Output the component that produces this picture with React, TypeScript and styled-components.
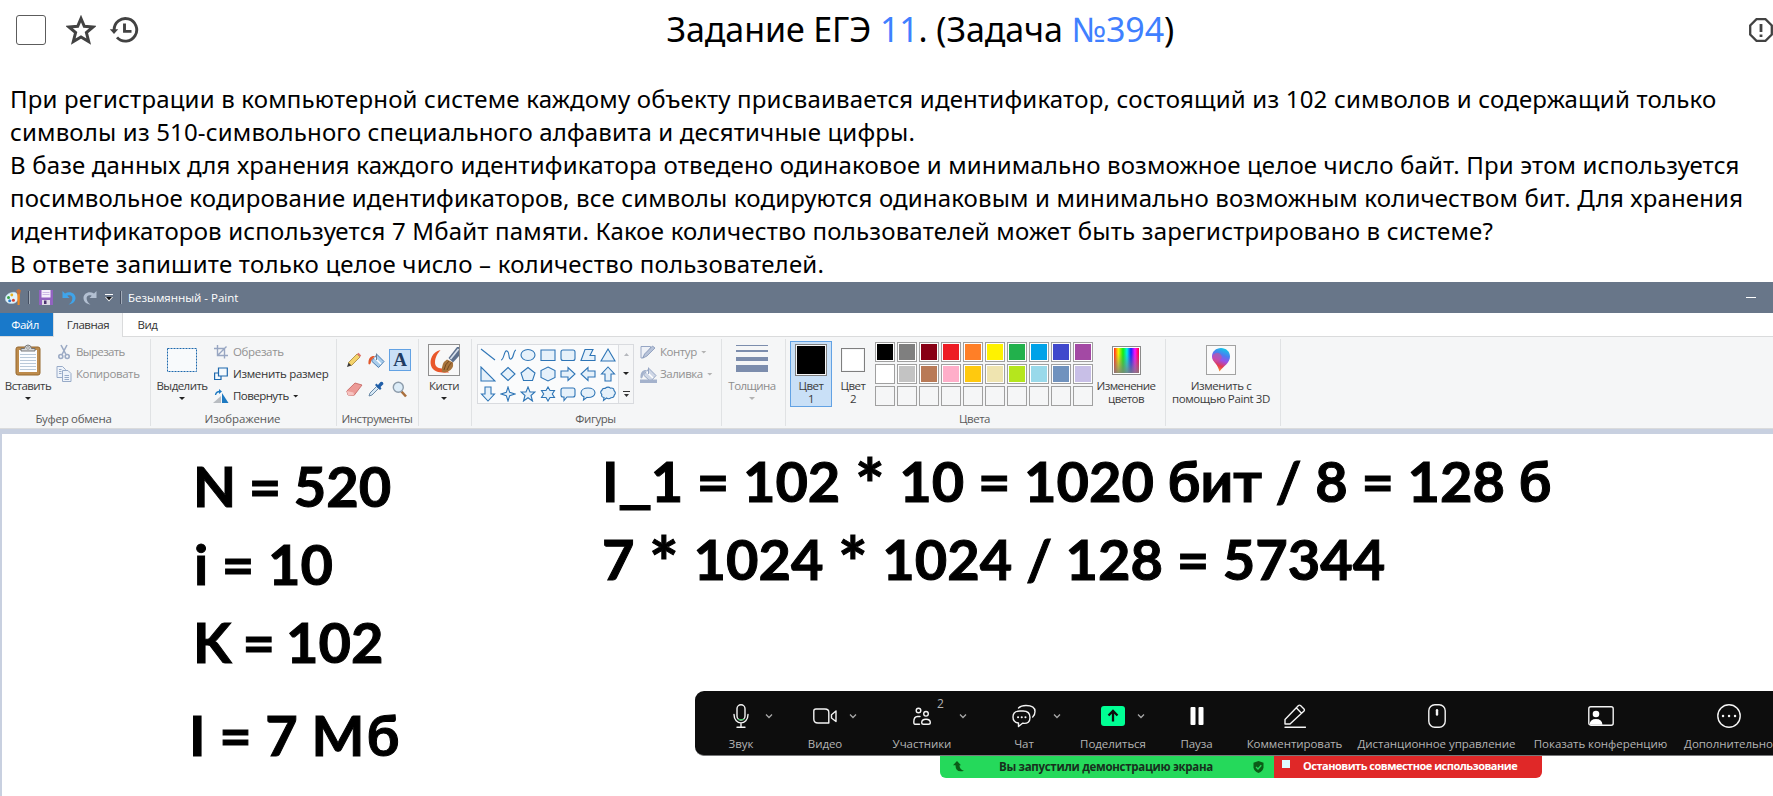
import React from "react";
import styled, { createGlobalStyle, css } from "styled-components";

const GlobalStyle = createGlobalStyle`
  *, *::before, *::after { box-sizing: border-box; }
  html, body { margin: 0; padding: 0; background: #fff; }
  body { overflow: hidden; }
  svg { display: block; flex: none; }
`;

const ui = `"Open Sans", "Noto Sans", sans-serif`;

const Page = styled.main`
  position: relative;
  width: 1773px;
  height: 796px;
  overflow: hidden;
  display: flex;
  flex-direction: column;
  background: #fff;
  color: #000;
  font-family: "Noto Sans", "Open Sans", sans-serif;
`;

/* ---------- task header and statement ---------- */

const TaskHeader = styled.header`
  display: flex;
  align-items: center;
  height: 59px;
  flex: none;
`;

const TaskTools = styled.div`
  display: flex;
  align-items: center;
  width: 200px;
  padding-left: 16px;
`;

const CheckBox = styled.span`
  width: 30px;
  height: 30px;
  border: 1px solid #5c5c5c;
  border-radius: 3px;
  margin-right: 20px;
`;

const TaskTitle = styled.h1`
  width: 1444px;
  margin: 0 0 2px;
  font-size: 34px;
  line-height: 46px;
  font-weight: 400;
  letter-spacing: -0.11px;
  text-align: center;
  white-space: nowrap;
`;

const TitleLink = styled.span`
  color: #3f80ff;
`;

const ReportSlot = styled.div`
  margin-left: 108px;
`;

const Statement = styled.section`
  height: 223px;
  flex: none;
  padding: 23px 0 0 10px;
`;

const StatementLine = styled.p<{ $ls?: number }>`
  margin: 0;
  font-size: 24px;
  line-height: 33px;
  letter-spacing: ${(p) => p.$ls ?? 0}px;
  white-space: nowrap;
`;

/* ---------- Paint window ---------- */

const TitleBar = styled.div`
  height: 31px;
  flex: none;
  display: flex;
  align-items: center;
  background: #687689;
  color: #fff;
  font: 11.5px/16px ${ui};
  padding-left: 5px;
`;

const BarDivider = styled.i<{ $l: number; $r: number }>`
  width: 2px;
  height: 13px;
  border-left: 1px solid #465062;
  border-right: 1px solid #a3acb9;
  margin: 0 ${(p) => p.$r}px 0 ${(p) => p.$l}px;
`;

const WindowTitle = styled.span`
  letter-spacing: 0;
`;

const Minimize = styled.i`
  width: 10px;
  height: 1px;
  background: #fff;
  margin: 0 17px 0 auto;
`;

const TabRow = styled.div`
  height: 24px;
  flex: none;
  display: flex;
  background: #fff;
  border-bottom: 1px solid #dadbdc;
  font: 11.5px/22px ${ui};
`;

const Tab = styled.div<{ $w: number; $kind?: "file" | "active" }>`
  width: ${(p) => p.$w}px;
  height: 24px;
  padding-top: 1px;
  text-align: center;
  color: #333;
  letter-spacing: -0.45px;
  ${(p) =>
    p.$kind === "file" &&
    css`
      height: 23px;
      padding-right: 3px;
      background: #1979ca;
      color: #fff;
    `}
  ${(p) =>
    p.$kind === "active" &&
    css`
      background: #f5f6f7;
      border: 1px solid #dadbdc;
      border-width: 0 1px;
    `}
`;

const Ribbon = styled.div`
  height: 92px;
  flex: none;
  display: flex;
  background: #f5f6f7;
  border-bottom: 1px solid #dadbdc;
  font: 11.5px/16px ${ui};
  color: #3b3b3b;
`;

const Group = styled.section<{ $w: number }>`
  width: ${(p) => p.$w}px;
  flex: none;
  height: 87px;
  margin-top: 2px;
  display: flex;
  flex-direction: column;
  border-right: 1px solid #e0e2e4;
`;

const GroupBody = styled.div<{ $pl?: number }>`
  display: flex;
  height: 72px;
  flex: none;
  padding-left: ${(p) => p.$pl ?? 0}px;
`;

const GroupLabel = styled.div<{ $ls?: number; $shift?: number }>`
  text-align: center;
  height: 15px;
  line-height: 15px;
  color: #5a5a5a;
  padding-right: ${(p) => p.$shift ?? 0}px;
  letter-spacing: ${(p) => p.$ls ?? -0.45}px;
  white-space: nowrap;
`;

const BigButton = styled.div<{ $w: number; $off?: boolean; $on?: boolean }>`
  width: ${(p) => p.$w}px;
  height: ${(p) => (p.$on ? 66 : 68)}px;
  margin-top: ${(p) => (p.$on ? 2 : 0)}px;
  flex: none;
  display: flex;
  flex-direction: column;
  align-items: center;
  text-align: center;
  white-space: nowrap;
  letter-spacing: -0.55px;
  color: ${(p) => (p.$off ? "#8d8d8d" : "#3b3b3b")};
  ${(p) =>
    p.$on &&
    css`
      background: #c9e0f7;
      box-shadow: inset 0 0 0 1px #62a2e4;
    `}
`;

const BigIcon = styled.div<{ $on?: boolean }>`
  height: ${(p) => (p.$on ? 37 : 39)}px;
  padding-top: ${(p) => (p.$on ? 1 : 3)}px;
  flex: none;
  display: flex;
  align-items: center;
  justify-content: center;
`;

const Caption = styled.span<{ $ls?: number }>`
  line-height: 13px;
  padding-top: 1px;
  letter-spacing: ${(p) => p.$ls ?? -0.55}px;
`;

const Caret = styled.i<{ $off?: boolean; $mt?: number; $ml?: number }>`
  width: 6px;
  height: 3px;
  flex: none;
  background: ${(p) => (p.$off ? "#b3b3b3" : "#222")};
  clip-path: polygon(0 0, 100% 0, 50% 100%);
  margin-top: ${(p) => p.$mt ?? 0}px;
  margin-left: ${(p) => p.$ml ?? 0}px;
`;

const Stack = styled.div<{ $ml?: number; $w: number }>`
  width: ${(p) => p.$w}px;
  margin-left: ${(p) => p.$ml ?? 0}px;
  display: flex;
  flex-direction: column;
  padding-top: 2px;
`;

const SmallButton = styled.div<{ $off?: boolean; $ls?: number }>`
  height: 22px;
  display: flex;
  align-items: center;
  gap: 4px;
  white-space: nowrap;
  letter-spacing: ${(p) => p.$ls ?? -0.4}px;
  color: ${(p) => (p.$off ? "#929292" : "#333")};
`;

const IconSlot = styled.span`
  width: 16px;
  display: flex;
  justify-content: center;
`;

const ToolGrid = styled.div`
  display: grid;
  grid-template-columns: 18px 26px 22px;
  grid-template-rows: 22px 22px;
  row-gap: 7px;
  padding-top: 10px;
`;

const ToolCell = styled.div<{ $on?: boolean }>`
  display: flex;
  align-items: center;
  justify-content: center;
  ${(p) =>
    p.$on &&
    css`
      background: #c9e0f7;
      border: 1px solid #62a2e4;
    `}
`;

const LetterTool = styled.b`
  font: bold 19px/20px "Liberation Serif", serif;
  letter-spacing: 0;
  color: #1f3c63;
`;

const Gallery = styled.div`
  width: 157px;
  height: 60px;
  margin-top: 5px;
  border: 1px solid #d9dbdf;
  background: #fafbfc;
  display: flex;
`;

const ShapeGrid = styled.div`
  display: grid;
  grid-template-columns: repeat(7, 20px);
  grid-template-rows: repeat(3, 19.6px);
  place-items: center;
  width: 141px;
  height: 58px;
  border-right: 1px solid #dcdee2;
`;

const GalleryScroll = styled.div`
  flex: 1;
  background: #f5f6f7;
  display: flex;
  flex-direction: column;
  align-items: center;
  padding-top: 8px;
  gap: 16px;
`;

const Swatch = styled.span<{ $c: string; $s: number }>`
  width: ${(p) => p.$s}px;
  height: ${(p) => p.$s}px;
  background: ${(p) => p.$c};
  border: 1px solid #7f7f7f;
  box-shadow: inset 0 0 0 1px #f5f6f7;
`;

const Palette = styled.div`
  display: grid;
  grid-template-columns: repeat(10, 20px);
  grid-auto-rows: 20px;
  gap: 2px;
  padding-top: 3px;
  margin-left: 1px;
`;

const Cell = styled.span<{ $c?: string }>`
  border: 1px solid #a0a0a0;
  background: ${(p) => p.$c ?? "#f5f6f7"};
  box-shadow: inset 0 0 0 1px ${(p) => (p.$c ? "#fff" : "#f5f6f7")};
`;

const Workspace = styled.div`
  position: relative;
  flex: 1;
  background: #c8d0e0;
  padding: 5px 0 0 2px;
`;

const Sheet = styled.div`
  position: relative;
  height: 100%;
  background: #fff;
`;

/* Text blocks that were typed freely on the drawing sheet. */
const CanvasText = styled.div<{ $x: number; $y: number; $ws?: number }>`
  position: absolute;
  left: ${(p) => p.$x}px;
  top: ${(p) => p.$y}px;
  font: 700 56px/78px Lato, "Open Sans", sans-serif;
  word-spacing: ${(p) => p.$ws ?? 0}px;
  -webkit-text-stroke: 1px #000;
  white-space: pre;
`;

const Star = styled.span`
  font-size: 70px;
  line-height: 0;
  vertical-align: -9px;
  margin: 0 1px;
`;

const Underscore = styled.span`
  display: inline-block;
  transform: scaleX(1.35);
  margin: 0 3px;
`;

const Wide = styled.span`
  letter-spacing: 3px;
`;

/* ---------- conference overlay ---------- */

const Overlay = styled.div`
  position: absolute;
  left: 695px;
  top: 691px;
  width: 1100px;
`;

const CallBar = styled.div`
  height: 65px;
  background: #0d0d0d;
  border-bottom: 1px solid #77787a;
  border-radius: 9px 0 0 9px;
  display: flex;
  padding-left: 4px;
`;

const CallItem = styled.div<{ $w: number }>`
  position: relative;
  width: ${(p) => p.$w}px;
  flex: none;
  display: flex;
  flex-direction: column;
  align-items: center;
  padding-top: 13px;
  font: 11.5px/16px ${ui};
  letter-spacing: -0.05px;
  color: #b4b4b4;
  white-space: nowrap;
`;

const CallIcon = styled.div`
  height: 24px;
  margin-bottom: 8px;
  display: flex;
  align-items: center;
`;

const Chevron = styled.svg<{ $dx: number }>`
  position: absolute;
  left: calc(50% + ${(p) => p.$dx - 4}px);
  top: 22px;
`;

const Badge = styled.span`
  position: absolute;
  left: 70px;
  top: 5px;
  font-size: 12px;
`;

const ShareStatus = styled.div`
  display: flex;
  height: 22px;
  width: 602px;
  margin-left: 245px;
  border-radius: 0 0 6px 6px;
  overflow: hidden;
  font: 700 11.5px/22px ${ui};
  white-space: nowrap;
`;

const Sharing = styled.div`
  width: 334px;
  flex: none;
  background: #25d95b;
  color: #17301d;
  display: flex;
  padding-left: 13px;
`;

const SharingText = styled.span`
  width: 254px;
  padding-left: 35px;
  margin-right: 35px;
  flex: none;
  letter-spacing: -0.3px;
`;

const StopShare = styled.div`
  width: 268px;
  flex: none;
  background: #e02828;
  color: #fff;
  display: flex;
  padding-left: 8px;
  font-size: 11px;
  line-height: 20px;
  letter-spacing: -0.5px;
`;

const StopSquare = styled.i`
  width: 8px;
  height: 8px;
  flex: none;
  margin: 4px 13px 0 0;
  background: #dffcff;
`;

/* ---------- drawings ---------- */

const shapePaths = [
  "M1 2 15 13",
  "M1 13C4 13 4 3 7 4s1 9 4 8 2-8 5-9",
  "M8 2.500C12 2.500 15 5 15 8s-3 5.500-7 5.500S1 11 1 8s3-5.500 7-5.500z",
  "M1 3H15V13.500H1z",
  "M3 3H13Q15 3 15 5V11.500Q15 13.500 13 13.500H3Q1 13.500 1 11.500V5Q1 3 3 3z",
  "M1 13.500 5 2.500H13L10 8.500H15V13.500z",
  "M8 2 15 14H1z",
  "M1 1V15H15z",
  "M8 1.500 15 8 8 14.500 1 8z",
  "M8 1.500 15 7 12.500 14.500H3.500L1 7z",
  "M8 1 15 4.500V11.500L8 15 1 11.500V4.500z",
  "M1 5H8V1.500L15 8 8 14.500V11H1z",
  "M15 5H8V1.500L1 8 8 14.500V11H15z",
  "M5 15V8H1.500L8 1 14.500 8H11V15z",
  "M5 1V8H1.500L8 15 14.500 8H11V1z",
  "M8 1 9.700 6.300 15 8 9.700 9.700 8 15 6.300 9.700 1 8 6.300 6.300z",
  "M8 1 10 6H15L11 9.500 12.500 15 8 11.700 3.500 15 5 9.500 1 6H6z",
  "M8 1 10 4.500H14.500L12.300 8 14.500 11.500H10L8 15 6 11.500H1.500L3.700 8 1.500 4.500H6z",
  "M3 2H13Q15 2 15 4V9Q15 11 13 11H7L4 14.500V11H3Q1 11 1 9V4Q1 2 3 2z",
  "M8 2C12 2 15 4 15 6.800S12 11.500 8 11.500L7 11.400 3.500 14 4 10.800C2 10 1 8.500 1 6.800 1 4 4 2 8 2z",
  "M5 2.500Q8 0 10.500 2.200 14 1.500 14 4.500 16.500 7 14.300 9 14 12 10.800 11.800 9 13.500 6.500 12L3.500 14.500 4 11.500Q1 11 1.800 8.300-.500 6 2 4.300 2.200 2 5 2.500z",
];

const Shape = ({ d, n }: { d: string; n: number }) => (
  <svg width="16" height="16" viewBox="0 0 16 16">
    <path d={d} fill={n < 2 ? "none" : "#e6f1fa"} stroke="#2e75b6" strokeWidth="1.1" />
  </svg>
);

const StarIcon = () => (
  <svg width="30" height="30" viewBox="0 0 30 30">
    <path
      d="M15 3.500 18.300 11.300 27 12 20.400 17.500 22.700 26.500 15 21.900 7.300 26.500 9.600 17.500 3 12 11.700 11.300z"
      fill="none"
      stroke="#424242"
      strokeWidth="3"
      strokeLinejoin="miter"
    />
  </svg>
);

const HistoryIcon = () => (
  <svg width="30" height="30" viewBox="0 0 30 30" fill="none" stroke="#424242" strokeWidth="2.900">
    <path d="M5.100 16V15A11.300 11.300 0 1 1 8 22.400" />
    <path d="M.800 14.300H9.200L5 19z" fill="#424242" stroke="none" />
    <path d="M15.500 8.500V16.400H22.500" />
  </svg>
);

const ReportIcon = () => (
  <svg width="24" height="24" viewBox="0 0 24 24" fill="none" stroke="#424242" strokeWidth="2.300">
    <path d="M7.500 1.200H16.500L22.800 7.500V16.500L16.500 22.800H7.500L1.200 16.500V7.500z" />
    <path d="M12 6V14" strokeWidth="2.800" />
    <path d="M12 16.500V19" strokeWidth="2.800" />
  </svg>
);

const PaintLogo = () => (
  <svg width="17" height="17" viewBox="0 0 17 17">
    <path d="M7 3.500C11 2.500 13.500 5 13 9c-.300 4-3 5.500-6.500 5.500C2.500 14.500 0 12.500.500 9 .800 6 3.500 4.200 7 3.500z" fill="#e3f3fb" stroke="#b5d9ec" strokeWidth=".6" />
    <circle cx="3.500" cy="8.500" r="1.500" fill="#3aa54a" />
    <circle cx="6.800" cy="6" r="1.400" fill="#e8b21d" />
    <circle cx="4.700" cy="11.700" r="1.500" fill="#2d7fd0" />
    <circle cx="8.400" cy="11.300" r="1.500" fill="#d9402d" />
    <path d="M12.300 5h2.600l-.300 11h-2z" fill="#f08a24" />
    <path d="M11.300 1.200 13.600 0l2.300 1.200L15 5.300h-2.800z" fill="#c9733c" />
  </svg>
);

const SaveIcon = () => (
  <svg width="14" height="15" viewBox="0 0 14 15">
    <path d="M0 0H14V15H0z" fill="#9263c0" />
    <path d="M2.500 0H11.500V7.500H2.500z" fill="#f5effc" />
    <path d="M3.500 2.500H10.500M3.500 4.500H10.500" stroke="#cdb9e6" />
    <path d="M3 10H11V15H3z" fill="#dedae6" />
    <path d="M5 10.500H7.500V14H5z" fill="#4c3370" />
  </svg>
);

const TurnIcon = ({ color, flip }: { color: string; flip?: boolean }) => (
  <svg width="14" height="15" viewBox="0 0 14 15">
    <g transform={flip ? "matrix(-1 0 0 1 14 0)" : undefined}>
      <path d="M.500 1V8H7.500L5.300 5.800C8 4.500 11 6 10.300 9.300 10 11.500 8.500 13.200 6.500 14.500 10.500 14 13.500 11.500 13.500 8 13.500 3 7.500.500 3 3.500z" fill={color} />
    </g>
  </svg>
);

const CustomizeIcon = () => (
  <svg width="8" height="9" viewBox="0 0 8 9">
    <path d="M0 1.500H8" stroke="#fff" />
    <path d="M0 4H8L4 8.500z" fill="#fff" />
    <path d="M1 4H7L4 7.300z" fill="#111" />
  </svg>
);

const PasteIcon = () => (
  <svg width="26" height="32" viewBox="0 0 26 32">
    <rect x="1" y="3" width="24" height="28" rx="2" fill="#bd8b4c" stroke="#96682f" />
    <path d="M4 6H22V28H4z" fill="#fbfdff" />
    <path d="M5 10.500H21M5 13.500H21M5 16.500H21M5 19.500H21M5 22.500H21M5 25.500H21" stroke="#b9c9d9" />
    <path d="M6 7V4.500H9.500Q10 1 13 1T16.500 4.500H20V7z" fill="#d5d8db" stroke="#6c6c6c" strokeWidth=".9" />
    <circle cx="13" cy="4" r="1.300" fill="#fff" stroke="#777" strokeWidth=".7" />
  </svg>
);

const CutIcon = () => (
  <svg width="14" height="16" viewBox="0 0 14 16" fill="none" stroke="#9baac4" strokeWidth="1.600">
    <path d="M4 1 9 10.500M10 1 5 10.500" />
    <circle cx="3.800" cy="12.500" r="2" />
    <circle cx="10.200" cy="12.500" r="2" />
  </svg>
);

const CopyIcon = () => (
  <svg width="16" height="16" viewBox="0 0 16 16" fill="#eef3fa" stroke="#98abc8">
    <path d="M1 .500H6.500L9.500 3.500V11.500H1z" />
    <path d="M6.500 4.500H12L15 7.500V15.500H6.500z" />
    <path d="M3 3.500H5.500M3 5.500H5.500M3 7.500H5.500M8.500 9.500H13M8.500 11.500H13M8.500 13.500H13" />
  </svg>
);

const SelectIcon = () => (
  <svg width="30" height="24" viewBox="0 0 30 24">
    <rect x=".5" y=".5" width="29" height="23" fill="#f8fafc" stroke="#1d68ad" strokeDasharray="2 1" />
  </svg>
);

const CropIcon = () => (
  <svg width="14" height="14" viewBox="0 0 14 14" fill="none" stroke="#98a6c2" strokeWidth="1.400">
    <path d="M3.500 0V10.500H14M0 3.500H10.500V13.500M4 10 12.500 1.500" />
  </svg>
);

const ResizeIcon = () => (
  <svg width="14" height="14" viewBox="0 0 14 14" fill="#f4f9fd" stroke="#1d68ad" strokeWidth="1.200">
    <path d="M.600 6H7V12.500H.600z" />
    <path d="M4.500 1H13.300V9H4.500z" />
  </svg>
);

const RotateIcon = () => (
  <svg width="16" height="15" viewBox="0 0 16 15">
    <path d="M0 14 8 7V14z" fill="#b9bdc2" />
    <path d="M9 4 15.500 14H9z" fill="#1e7ac2" />
    <path d="M2.500 6Q3 2.500 7 2.500" fill="none" stroke="#1e7ac2" strokeWidth="1.300" />
    <path d="M6 0 9 2.500 6 5z" fill="#1e7ac2" />
  </svg>
);

const PencilTool = () => (
  <svg width="16" height="16" viewBox="0 0 16 16">
    <path d="M1 15 2.500 10.500 5.500 13.500z" fill="#3c3a38" />
    <path d="M2.500 10.500 11 2 14 5 5.500 13.500z" fill="#f4d36b" stroke="#9c7726" strokeWidth=".7" />
    <path d="M11 2 12.500.800 15.200 3.500 14 5z" fill="#e0796d" />
  </svg>
);

const BucketTool = ({ gray }: { gray?: boolean }) => (
  <svg width="17" height="17" viewBox="0 0 17 17">
    <path d="M9 2.500 16 9.500 10.500 15.500 3.500 9z" fill={gray ? "#cfd7e6" : "#a9cdec"} stroke={gray ? "#96a6c4" : "#4d7fb3"} />
    <path d="M6.500 5.500 13 12" stroke="#fff" strokeWidth="1.500" />
    <path d="M8.500 8V1.500" stroke={gray ? "#96a6c4" : "#6c7d90"} />
    <path d="M7 4C3 3.500 0 6 .500 12 2 13.500 3 11 3.200 8.500z" fill={gray ? "#a4b2cc" : "#e2582b"} />
    {gray && <path d="M0 13.500H17V17H0z" fill="#a4b2cc" />}
  </svg>
);

const EraserTool = () => (
  <svg width="17" height="15" viewBox="0 0 17 15">
    <path d="M.800 9 9 1 16 3 8 13.500 2 13z" fill="#ec9a96" stroke="#c35f5c" strokeWidth=".8" />
    <path d="M.800 9 7.500 10.500 8 13.500 2 13z" fill="#f7c4c1" />
  </svg>
);

const DropperTool = () => (
  <svg width="16" height="16" viewBox="0 0 16 16">
    <path d="M1 15 2 12 8.500 5.500 10.500 7.500 4 14z" fill="#d8e9f6" stroke="#5d7f9f" strokeWidth=".9" />
    <path d="M7 4 8.500 2.500 10 4 12.500 1Q15 0 15.500 3L12.500 6 13.500 7.500 12 9z" fill="#215fa8" />
  </svg>
);

const ZoomTool = () => (
  <svg width="16" height="17" viewBox="0 0 16 17">
    <path d="M9.500 10.500 14 15.500" stroke="#a96f3d" strokeWidth="2.600" />
    <circle cx="6.300" cy="6.300" r="5" fill="#dcecf8" stroke="#8c9baa" strokeWidth="1.400" />
  </svg>
);

const BrushPicture = () => (
  <svg width="32" height="32" viewBox="0 0 32 32">
    <rect x=".5" y=".5" width="31" height="31" fill="#f8f8f8" stroke="#8f8f8f" />
    <path d="M12.500 6C4 8 1.500 16 3 21.500 5 28.500 13 29 21 28.500L17 24C11 25.500 7 23 7 18.500 7 13 10 9 12.500 6z" fill="#e9572b" />
    <path d="M20.500 14 29 3 31 3V12L25 18.500z" fill="#5d708c" />
    <path d="M22.500 15 30.500 5" stroke="#d7e0ec" strokeWidth="1.800" />
    <path d="M14 28Q13 19 19 15.500L25 18.500Q26 25 20 27.500 17 28.800 14 28z" fill="#a8743c" />
    <path d="M16 26Q17 20 21 17M19 26Q21 21 23.500 18.500" stroke="#74491f" fill="none" />
  </svg>
);

const OutlineIcon = () => (
  <svg width="16" height="14" viewBox="0 0 16 14">
    <path d="M1 1.500H10.500V3L3 12V13H1z" fill="#eef1f7" stroke="#96a6c4" />
    <path d="M3 13 4.500 9 12.500 1 15 3 7 11z" fill="#b7c3d9" stroke="#8496b8" strokeWidth=".8" />
  </svg>
);

const ThicknessIcon = () => (
  <svg width="32" height="30" viewBox="0 0 32 30" fill="#7c8dad">
    <path d="M0 0H32V1H0zM0 5H32V7H0zM0 12H32V16H0zM0 20H32V27H0z" />
  </svg>
);

const SpectrumPicture = () => (
  <svg width="29" height="29" viewBox="0 0 29 29">
    <defs>
      <linearGradient id="hue">
        <stop offset="0" stopColor="#f22" />
        <stop offset=".17" stopColor="#fe0" />
        <stop offset=".36" stopColor="#1e1" />
        <stop offset=".52" stopColor="#0ee" />
        <stop offset=".68" stopColor="#12f" />
        <stop offset=".84" stopColor="#f1f" />
        <stop offset="1" stopColor="#f03" />
      </linearGradient>
      <linearGradient id="fade" x2="0" y2="1">
        <stop offset=".2" stopColor="#808080" stopOpacity="0" />
        <stop offset="1" stopColor="#808080" stopOpacity=".85" />
      </linearGradient>
    </defs>
    <rect x=".5" y=".5" width="28" height="28" fill="#fff" stroke="#8b8b8b" />
    <path d="M2 2H27V27H2z" fill="url(#hue)" />
    <path d="M2 2H27V27H2z" fill="url(#fade)" />
  </svg>
);

const Paint3DPicture = () => (
  <svg width="30" height="30" viewBox="0 0 30 30">
    <defs>
      <linearGradient id="drop" x1=".3" y1="1" x2=".6" y2="0">
        <stop offset="0" stopColor="#f8a020" />
        <stop offset=".25" stopColor="#e63a50" />
        <stop offset=".5" stopColor="#9a50e8" />
        <stop offset=".72" stopColor="#4d7cf0" />
        <stop offset="1" stopColor="#12c6e8" />
      </linearGradient>
    </defs>
    <rect x=".5" y=".5" width="29" height="29" fill="#fafafa" stroke="#a2a2a2" />
    <path d="M15 3C20 3 24 6.500 24 11.500 24 18 17.500 21 13.500 26.500 12.500 23 11.500 21 9.500 18.500 7.500 16 6 14.500 6 11.500 6 6.500 10 3 15 3z" fill="url(#drop)" />
    <path d="M10 8Q14 7 16 12 13 18 9 17.500 6 14 7 10z" fill="#e44b86" opacity=".5" />
  </svg>
);

const Line = ({ w = 24, h = 24, children }: { w?: number; h?: number; children: React.ReactNode }) => (
  <svg width={w} height={h} viewBox={`0 0 ${w} ${h}`} fill="none" stroke="#f4f4f4" strokeWidth="1.400" strokeLinecap="round" strokeLinejoin="round">
    {children}
  </svg>
);

const MicIcon = () => (
  <Line w={16}>
    <rect x="4" y=".8" width="8" height="15.200" rx="4" />
    <path d="M1 10.500C1 21.700 15 21.700 15 10.500M8 19V23M4 23.200H12" />
    <path d="M5.500 15.600H10.500" stroke="#4fc76c" />
  </Line>
);

const VideoIcon = () => (
  <Line>
    <path d="M3 5H12Q15.800 5 15.800 8.500V19H5Q.800 19 .800 15V7Q.800 5 3 5zM18.500 10.800 23 7V17.500L18.500 14z" />
  </Line>
);

const PeopleIcon = () => (
  <Line w={18}>
    <circle cx="5.500" cy="6.500" r="2.300" />
    <circle cx="13" cy="9.800" r="2.300" />
    <path d="M6.500 20.300H2Q.800 20.300.800 18 .800 12.500 4.500 12.500H7" />
    <path d="M10.500 20.300Q8.700 20.300 8.700 18.500 8.700 15.200 13 15.200T17.300 18.500Q17.300 20.300 15.500 20.300z" />
  </Line>
);

const ChatIcon = () => (
  <Line>
    <path d="M8 7H11Q18 7 18 13.500T11 19.300H10.500L6.500 22.500V19Q1 18.500 1 13 1 7 8 7z" />
    <path d="M6.500 4Q9 1.500 14 1.500 23 1.500 23 7.500 23 11 20.700 13" />
    <path d="M6 13.200H6.100M9.700 13.200H9.800M13.400 13.200H13.500" strokeWidth="2" />
  </Line>
);

const ShareIcon = () => (
  <svg width="24" height="20" viewBox="0 0 24 20">
    <rect width="24" height="20" rx="3" fill="#00ff94" />
    <path d="M12 15.500V6M7.500 9.500 12 5 16.500 9.500" fill="none" stroke="#0d0d0d" strokeWidth="2.300" />
  </svg>
);

const PauseIcon = () => (
  <svg width="14" height="18" viewBox="0 0 14 18" fill="#fff">
    <rect x=".5" width="5" height="18" rx="1" />
    <rect x="8.500" width="5" height="18" rx="1" />
  </svg>
);

const AnnotateIcon = () => (
  <Line w={22}>
    <path d="M1 20V15.500L14.500 1.500Q15.500.700 16.500 1.500L20 5Q20.800 6 20 7L6 20zM12.500 4 17.300 9" />
    <path d="M1 23.300H21.500" />
  </Line>
);

const MouseIcon = () => (
  <Line w={18}>
    <rect x=".8" y=".8" width="16.400" height="22.400" rx="6" />
    <path d="M9 6.300V10.500" strokeWidth="2.400" />
  </Line>
);

const ShowMeetingIcon = () => (
  <Line w={26}>
    <rect x=".8" y="2.800" width="24.400" height="18.400" rx="2" />
    <circle cx="8" cy="10" r="3.300" fill="#fff" stroke="none" />
    <path d="M1.500 20.800Q2 15 8 15T14.500 20.800z" fill="#fff" stroke="none" />
  </Line>
);

const MoreIcon = () => (
  <Line>
    <circle cx="12" cy="12" r="11.200" />
    <path d="M6 12H6.100M12 12H12.100M18 12H18.100" strokeWidth="2.400" />
  </Line>
);

const ReturnArrow = () => (
  <svg width="11" height="20" viewBox="0 0 11 20">
    <path d="M4 5 8 9.200H6.500Q6.500 13.500 11 14.700 2.500 17 2.500 9.200H0z" fill="#0b5c17" />
  </svg>
);

const ShieldIcon = () => (
  <svg width="11" height="20" viewBox="0 0 11 20">
    <path d="M5.500 5 10.500 6.800V11.500Q10 15 5.500 17 1 15 .500 11.500V6.800z" fill="#0b5c17" />
    <path d="M3 11 5 13 8.300 9.300" fill="none" stroke="#25d95b" strokeWidth="1.300" />
  </svg>
);

/* ---------- data ---------- */

const statement: { text: string; ls: number }[] = [
  { ls: 0.185, text: "При регистрации в компьютерной системе каждому объекту присваивается идентификатор, состоящий из 102 символов и содержащий только" },
  { ls: 0.165, text: "символы из 510-символьного специального алфавита и десятичные цифры." },
  { ls: 0.155, text: "В базе данных для хранения каждого идентификатора отведено одинаковое и минимально возможное целое число байт. При этом используется" },
  { ls: 0.15, text: "посимвольное кодирование идентификаторов, все символы кодируются одинаковым и минимально возможным количеством бит. Для хранения" },
  { ls: 0.185, text: "идентификаторов используется 7 Мбайт памяти. Какое количество пользователей может быть зарегистрировано в системе?" },
  { ls: 0.205, text: "В ответе запишите только целое число – количество пользователей." },
];

const colors = [
  "#000000", "#7f7f7f", "#880015", "#ed1c24", "#ff7f27", "#fff200", "#22b14c", "#00a2e8", "#3f48cc", "#a349a4",
  "#ffffff", "#c3c3c3", "#b97a57", "#ffaec9", "#ffc90e", "#efe4b0", "#b5e61d", "#99d9ea", "#7092be", "#c8bfe7",
];
const emptyCells = Array.from({ length: 10 }, (_, i) => i);

const callItems: { label: string; w: number; icon: React.ReactNode; dx?: number; badge?: string }[] = [
  { label: "Звук", w: 84, icon: <MicIcon />, dx: 28 },
  { label: "Видео", w: 84, icon: <VideoIcon />, dx: 28 },
  { label: "Участники", w: 110, icon: <PeopleIcon />, dx: 41, badge: "2" },
  { label: "Чат", w: 94, icon: <ChatIcon />, dx: 33 },
  { label: "Поделиться", w: 84, icon: <ShareIcon />, dx: 28 },
  { label: "Пауза", w: 83, icon: <PauseIcon /> },
  { label: "Комментировать", w: 113, icon: <AnnotateIcon /> },
  { label: "Дистанционное управление", w: 171, icon: <MouseIcon /> },
  { label: "Показать конференцию", w: 157, icon: <ShowMeetingIcon /> },
  { label: "Дополнительно", w: 99, icon: <MoreIcon /> },
];

const Gap = styled.i<{ $w: number }>`
  width: ${(p) => p.$w}px;
  flex: none;
`;

export default function App() {
  return (
    <Page>
      <GlobalStyle />
      <TaskHeader>
        <TaskTools>
          <CheckBox />
          <StarIcon />
          <Gap $w={13} />
          <HistoryIcon />
        </TaskTools>
        <TaskTitle>
          Задание ЕГЭ <TitleLink>11</TitleLink>. (Задача <TitleLink>№394</TitleLink>)
        </TaskTitle>
        <ReportSlot>
          <ReportIcon />
        </ReportSlot>
      </TaskHeader>

      <Statement>
        {statement.map((line) => (
          <StatementLine key={line.text} $ls={line.ls}>{line.text}</StatementLine>
        ))}
      </Statement>

      <TitleBar>
        <PaintLogo />
        <BarDivider $l={6} $r={9} />
        <SaveIcon />
        <Gap $w={9} />
        <TurnIcon color="#3fa4ea" />
        <Gap $w={7} />
        <TurnIcon color="#b3c0d2" flip />
        <Gap $w={8} />
        <CustomizeIcon />
        <BarDivider $l={7} $r={6} />
        <WindowTitle>Безымянный - Paint</WindowTitle>
        <Minimize />
      </TitleBar>

      <TabRow>
        <Tab $w={53} $kind="file">Файл</Tab>
        <Tab $w={70} $kind="active">Главная</Tab>
        <Tab $w={49}>Вид</Tab>
      </TabRow>

      <Ribbon>
        <Group $w={151}>
          <GroupBody>
            <BigButton $w={56}>
              <BigIcon><PasteIcon /></BigIcon>
              <Caption>Вставить</Caption>
              <Caret $mt={5} />
            </BigButton>
            <Stack $w={90}>
              <SmallButton $off $ls={-0.65}><IconSlot><CutIcon /></IconSlot>Вырезать</SmallButton>
              <SmallButton $off $ls={-0.4}><IconSlot><CopyIcon /></IconSlot>Копировать</SmallButton>
            </Stack>
          </GroupBody>
          <GroupLabel $ls={-0.3} $shift={3}>Буфер обмена</GroupLabel>
        </Group>

        <Group $w={186}>
          <GroupBody $pl={4}>
            <BigButton $w={54}>
              <BigIcon><SelectIcon /></BigIcon>
              <Caption>Выделить</Caption>
              <Caret $mt={5} />
            </BigButton>
            <Stack $w={118} $ml={4}>
              <SmallButton $off $ls={-0.35}><IconSlot><CropIcon /></IconSlot>Обрезать</SmallButton>
              <SmallButton $ls={-0.3}><IconSlot><ResizeIcon /></IconSlot>Изменить размер</SmallButton>
              <SmallButton $ls={-0.55}><IconSlot><RotateIcon /></IconSlot>Повернуть<Caret /></SmallButton>
            </Stack>
          </GroupBody>
          <GroupLabel $ls={-0.15} $shift={2}>Изображение</GroupLabel>
        </Group>

        <Group $w={82}>
          <GroupBody $pl={8}>
            <ToolGrid>
              <ToolCell><PencilTool /></ToolCell>
              <ToolCell><BucketTool /></ToolCell>
              <ToolCell $on><LetterTool>A</LetterTool></ToolCell>
              <ToolCell><EraserTool /></ToolCell>
              <ToolCell><DropperTool /></ToolCell>
              <ToolCell><ZoomTool /></ToolCell>
            </ToolGrid>
          </GroupBody>
          <GroupLabel $ls={-0.48} $shift={1}>Инструменты</GroupLabel>
        </Group>

        <Group $w={53}>
          <GroupBody $pl={3}>
            <BigButton $w={44}>
              <BigIcon><BrushPicture /></BigIcon>
              <Caption>Кисти</Caption>
              <Caret $mt={5} />
            </BigButton>
          </GroupBody>
        </Group>

        <Group $w={250}>
          <GroupBody $pl={5}>
            <Gallery>
              <ShapeGrid>
                {shapePaths.map((d, i) => (
                  <Shape key={i} d={d} n={i} />
                ))}
              </ShapeGrid>
              <GalleryScroll>
                <svg width="5" height="3"><path d="M0 3 2.500 0 5 3z" fill="#b5b8bd" /></svg>
                <Caret />
                <svg width="7" height="6"><path d="M0 .500H7" stroke="#333" /><path d="M1 3H6L3.500 6z" fill="#333" /></svg>
              </GalleryScroll>
            </Gallery>
            <Stack $w={76} $ml={6}>
              <SmallButton $off $ls={-0.45}><IconSlot><OutlineIcon /></IconSlot>Контур<Caret $off /></SmallButton>
              <SmallButton $off $ls={-0.45}><IconSlot><BucketTool gray /></IconSlot>Заливка<Caret $off /></SmallButton>
            </Stack>
          </GroupBody>
          <GroupLabel $shift={2}>Фигуры</GroupLabel>
        </Group>

        <Group $w={64}>
          <GroupBody $pl={3}>
            <BigButton $w={54} $off>
              <BigIcon><ThicknessIcon /></BigIcon>
              <Caption>Толщина</Caption>
              <Caret $off $mt={5} />
            </BigButton>
          </GroupBody>
        </Group>

        <Group $w={380}>
          <GroupBody $pl={4}>
            <BigButton $w={42} $on>
              <BigIcon $on><Swatch $c="#000" $s={32} /></BigIcon>
              <Caption>Цвет<br />1</Caption>
            </BigButton>
            <BigButton $w={42}>
              <BigIcon><Swatch $c="#fff" $s={24} /></BigIcon>
              <Caption>Цвет<br />2</Caption>
            </BigButton>
            <Palette>
              {colors.map((c) => (
                <Cell key={c} $c={c} />
              ))}
              {emptyCells.map((i) => (
                <Cell key={i} />
              ))}
            </Palette>
            <BigButton $w={66}>
              <BigIcon><SpectrumPicture /></BigIcon>
              <Caption>Изменение<br />цветов</Caption>
            </BigButton>
          </GroupBody>
          <GroupLabel $shift={2}>Цвета</GroupLabel>
        </Group>

        <Group $w={115}>
          <GroupBody $pl={2}>
            <BigButton $w={106}>
              <BigIcon><Paint3DPicture /></BigIcon>
              <Caption $ls={-0.4}>Изменить с<br />помощью Paint 3D</Caption>
            </BigButton>
          </GroupBody>
        </Group>
      </Ribbon>

      <Workspace>
        <Sheet>
          <CanvasText $x={191} $y={13} $ws={-1}>N = 520</CanvasText>
          <CanvasText $x={192} $y={91}>i = 10</CanvasText>
          <CanvasText $x={191} $y={169} $ws={-2.5}>K = 102</CanvasText>
          <CanvasText $x={187} $y={262}>I = 7 <Wide>Мб</Wide></CanvasText>
          <CanvasText $x={600} $y={8}>
            I<Underscore>_</Underscore>1 = 102 <Star>*</Star> 10 = 1020 бит / 8 = 128 б
          </CanvasText>
          <CanvasText $x={600} $y={86}>
            7 <Star>*</Star> 1024 <Star>*</Star> 1024 / 128 = 57344
          </CanvasText>
        </Sheet>
      </Workspace>

      <Overlay>
        <CallBar>
          {callItems.map((item) => (
            <CallItem key={item.label} $w={item.w}>
              <CallIcon>{item.icon}</CallIcon>
              {item.label}
              {item.badge && <Badge>{item.badge}</Badge>}
              {item.dx && (
                <Chevron $dx={item.dx} width="8" height="6" viewBox="0 0 8 6">
                  <path d="M1 1.500 4 4.500 7 1.500" fill="none" stroke="#a8a8a8" strokeWidth="1.300" />
                </Chevron>
              )}
            </CallItem>
          ))}
        </CallBar>
        <ShareStatus>
          <Sharing>
            <ReturnArrow />
            <SharingText>Вы запустили демонстрацию экрана</SharingText>
            <ShieldIcon />
          </Sharing>
          <StopShare>
            <StopSquare />
            Остановить совместное использование
          </StopShare>
        </ShareStatus>
      </Overlay>
    </Page>
  );
}
